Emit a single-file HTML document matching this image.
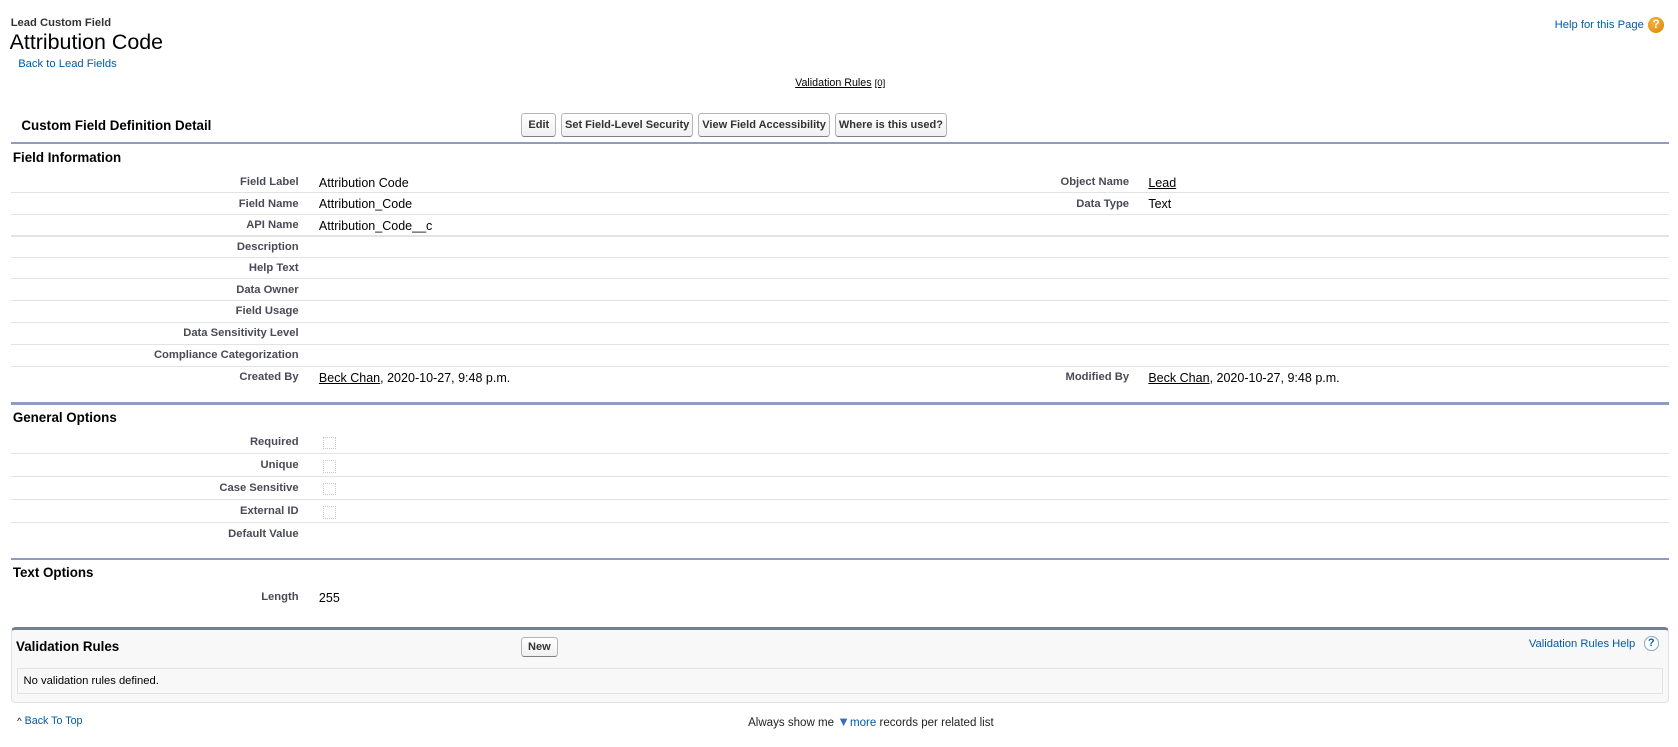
<!DOCTYPE html>
<html><head><meta charset="utf-8"><style>
html,body{margin:0;padding:0;background:#fff;width:1678px;height:747px;overflow:hidden}
#w{zoom:1.0702;position:relative;width:1568px;height:698px;font-family:"Liberation Sans",Arial,sans-serif;color:#000}
.a{position:absolute;white-space:nowrap}
.lbl{position:absolute;font-size:10.5px;font-weight:bold;color:#4a4a56;text-align:right;white-space:nowrap}
.val{position:absolute;font-size:11.7px;color:#000;white-space:nowrap}
.sep{position:absolute;left:10px;width:1550px;height:1px;background:#e3e3e3}
.bar{position:absolute;left:10px;width:1550px;height:2px;background:#8e9dbe}
.btn{position:absolute;top:106px;border:1px solid #b5b5b5;border-bottom-color:#7f7f7f;border-radius:3px;background:linear-gradient(#fff,#f0f0f0);font-size:10.3px;font-weight:bold;color:#333;line-height:22px;text-align:center;box-sizing:border-box;height:22px;white-space:nowrap;overflow:hidden}
.h3{position:absolute;font-size:12.5px;font-weight:bold;color:#000;left:12px}
.cb{position:absolute;left:302px;width:10px;height:10px;border:1px dotted #c8c8c8}
a,.lnk{color:#015ba7;text-decoration:none}
</style></head><body><div id="w">
<div class="a" style="left:10px;top:16px;font-size:10.5px;font-weight:bold;color:#333">Lead Custom Field</div>
<div class="a" style="left:9px;top:28px;font-size:20px;color:#000">Attribution Code</div>
<div class="a lnk" style="left:17px;top:54px;font-size:10.5px">Back to Lead Fields</div>
<div class="a lnk" style="right:32px;top:18px;font-size:10.5px">Help for this Page</div>
<div class="a" style="left:1540px;top:16px;width:15px;height:15px;border-radius:50%;background:radial-gradient(circle at 40% 35%,#f7b53a,#d9810a);color:#fff;font-size:11px;font-weight:bold;text-align:center;line-height:15px">?</div>
<div class="a" style="left:743px;top:72px;font-size:10px;color:#000"><span style="text-decoration:underline">Validation Rules</span> <span style="font-size:9px;text-decoration:underline">[0]</span></div>

<div class="a" style="left:20px;top:110px;font-size:12.5px;font-weight:bold">Custom Field Definition Detail</div>
<div class="btn" style="left:487px;width:33px">Edit</div>
<div class="btn" style="left:524px;width:124px">Set Field-Level Security</div>
<div class="btn" style="left:652px;width:124px">View Field Accessibility</div>
<div class="btn" style="left:780px;width:105px">Where is this used?</div>
<div class="bar" style="top:133px"></div>
<div class="h3" style="top:140px">Field Information</div>

<div class="lbl" style="right:1289px;top:164px">Field Label</div><div class="val" style="left:298px;top:164px">Attribution Code</div>
<div class="lbl" style="right:513px;top:164px">Object Name</div><div class="val" style="left:1073px;top:164px;text-decoration:underline">Lead</div>
<div class="sep" style="top:179px"></div>
<div class="lbl" style="right:1289px;top:185px">Field Name</div><div class="val" style="left:298px;top:184px">Attribution_Code</div>
<div class="lbl" style="right:513px;top:185px">Data Type</div><div class="val" style="left:1073px;top:184px">Text</div>
<div class="sep" style="top:200px"></div>
<div class="lbl" style="right:1289px;top:205px">API Name</div><div class="val" style="left:298px;top:205px">Attribution_Code__c</div>
<div class="sep" style="top:220px"></div>
<div class="lbl" style="right:1289px;top:225px">Description</div>
<div class="sep" style="top:240px"></div>
<div class="lbl" style="right:1289px;top:245px">Help Text</div>
<div class="sep" style="top:260px"></div>
<div class="lbl" style="right:1289px;top:265px">Data Owner</div>
<div class="sep" style="top:280px"></div>
<div class="lbl" style="right:1289px;top:285px">Field Usage</div>
<div class="sep" style="top:301px"></div>
<div class="lbl" style="right:1289px;top:306px">Data Sensitivity Level</div>
<div class="sep" style="top:321px"></div>
<div class="lbl" style="right:1289px;top:326px">Compliance Categorization</div>
<div class="sep" style="top:342px"></div>
<div class="lbl" style="right:1289px;top:347px">Created By</div><div class="val" style="left:298px;top:347px"><u>Beck Chan</u>, 2020-10-27, 9:48 p.m.</div>
<div class="lbl" style="right:513px;top:347px">Modified By</div><div class="val" style="left:1073px;top:347px"><u>Beck Chan</u>, 2020-10-27, 9:48 p.m.</div>

<div class="bar" style="top:376px"></div>
<div class="h3" style="top:383px">General Options</div>
<div class="lbl" style="right:1289px;top:407px">Required</div><div class="cb" style="top:408px"></div>
<div class="sep" style="top:423px"></div>
<div class="lbl" style="right:1289px;top:429px">Unique</div><div class="cb" style="top:430px"></div>
<div class="sep" style="top:445px"></div>
<div class="lbl" style="right:1289px;top:450px">Case Sensitive</div><div class="cb" style="top:451px"></div>
<div class="sep" style="top:466px"></div>
<div class="lbl" style="right:1289px;top:472px">External ID</div><div class="cb" style="top:473px"></div>
<div class="sep" style="top:488px"></div>
<div class="lbl" style="right:1289px;top:493px">Default Value</div>

<div class="bar" style="top:521px"></div>
<div class="h3" style="top:528px">Text Options</div>
<div class="lbl" style="right:1289px;top:552px">Length</div><div class="val" style="left:298px;top:552px">255</div>

<div class="a" style="left:10px;top:586px;width:1548px;height:67px;background:#f8f8f8;border:1px solid #e0e3e5;border-top:3px solid #747e96;border-radius:4px"></div>
<div class="a" style="left:15px;top:597px;font-size:12.5px;font-weight:bold">Validation Rules</div>
<div class="btn" style="left:487px;top:595px;width:34px;height:19px;line-height:18px">New</div>
<div class="a lnk" style="right:40px;top:596px;font-size:10.5px">Validation Rules Help</div>
<div class="a" style="left:1536px;top:594px;width:12px;height:12px;border:1px solid #8aa6c8;border-radius:50%;background:#fff;color:#015ba7;font-size:10px;font-weight:bold;text-align:center;line-height:12px">?</div>
<div class="a" style="left:16px;top:624px;width:1536px;height:23px;border:1px solid #e0e3e5;background:#f8f8f8"></div>
<div class="a" style="left:22px;top:631px;font-size:10.5px">No validation rules defined.</div>

<div class="a" style="left:16px;top:668px;font-size:10px"><span style="font-size:9px">^</span> <span class="lnk">Back To Top</span></div>
<div class="a" style="left:699px;top:667px;font-size:10.8px;color:#222">Always show me <span style="color:#3c6cb3;font-size:12px">▼</span><span class="lnk">more</span> records per related list</div>
</div></body></html>
